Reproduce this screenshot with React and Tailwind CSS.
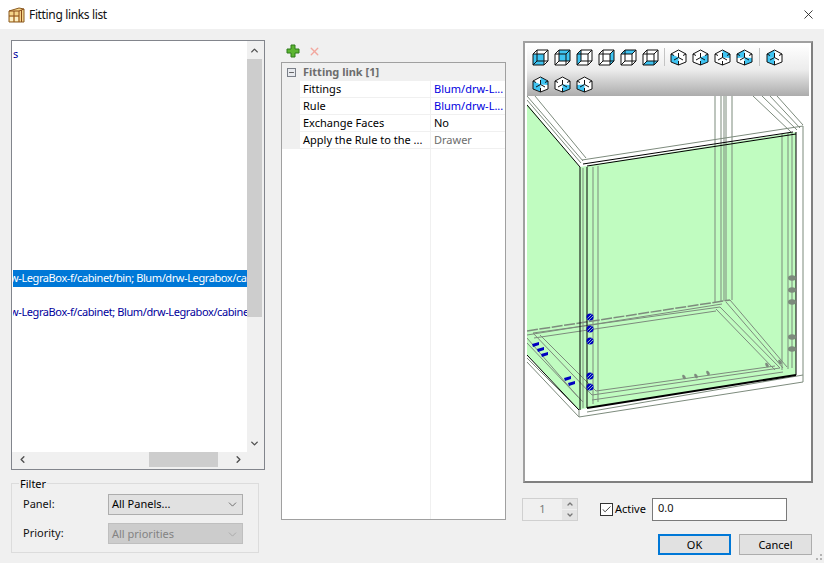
import { X, ChevronDown, ChevronUp, ChevronLeft, ChevronRight, Minus, Check } from 'lucide-react';

function CubeIcon({ face }) {
  const faces = {
    front: 'M1 5h11v11H1z',
    back: 'M5 1h11v11H5z',
    left: 'M1 5l4-4v11l-4 4z',
    right: 'M12 5l4-4v11l-4 4z',
    top: 'M1 5l4-4h11l-4 4z',
    bottom: 'M1 16l4-4h11l-4 4z',
  };
  return (
    <svg width="17" height="17" viewBox="0 0 17 17" className="shrink-0">
      <path d="M1 5l4-4h11v11l-4 4H1z" fill="#fff" />
      <path d={faces[face]} fill="#3fc4f2" />
      <path d="M1 5h11v11H1zM5 1h11v11H5zM1 5l4-4M12 5l4-4M12 16l4-4M1 16l4-4" fill="none" stroke="#111" strokeWidth="1" />
    </svg>
  );
}

function IsoIcon({ wedges }) {
  const all = {
    l: 'M8.5 8.5L1 5v8l7.5 3z',
    r: 'M8.5 8.5L16 5v8l-7.5 3z',
    t: 'M8.5 8.5L1 5l7.5-4L16 5z',
    tr: 'M8.5 8.5V1L16 5v4z',
    tl: 'M8.5 8.5V1L1 5v4z',
    br: 'M8.5 8.5L16 9v4l-7.5 3z',
    bl: 'M8.5 8.5L1 9v4l7.5 3z',
  };
  return (
    <svg width="17" height="17" viewBox="0 0 17 17" className="shrink-0">
      <path d="M8.5 1L16 5v8l-7.5 3L1 13V5z" fill="#fff" />
      {wedges.map((w) => (
        <path key={w} d={all[w]} fill="#3fc4f2" />
      ))}
      <path d="M8.5 1L16 5v8l-7.5 3L1 13V5zM8.5 8.5V4M8.5 8.5L4 11M8.500 8.5l4.5 2.5M8.5 12v4M1 5l3 1.5M16 5l-3 1.5" fill="none" stroke="#111" strokeWidth="1" />
    </svg>
  );
}

function Cabinet() {
  const grey = [
    'M527 96L583 161', 'M527 100L581 163', 'M535 96L586 158', 'M582 160L803 126', 'M803 126V132',
    'M753 96L791 132', 'M762 96L797 130', 'M770 96L800 128', 'M777 96L803 125',
    'M715 96V302', 'M721 96V301', 'M724 96V301', 'M726 96V301', 'M732 96V300',
    'M782 134V370', 'M788 133V369', 'M792 133V368', 'M803 132V373',
    'M583 168V408', 'M593 167V404', 'M598 166V402',
    'M527 335L722 304', 'M533 333L720 307', 'M534 338L716 311',
    'M730 300L787 367', 'M726 302L783 368', 'M720 307L780 368', 'M716 309L775 370',
    'M592 395L780 368', 'M592 400L783 372', 'M596 391L775 366', 'M587 412L803 375',
    'M579 417L803 382', 'M803 373V382', 'M579 410V417', 'M527 358L579 410', 'M527 362L579 417',
    'M527 338L578 397', 'M527 343L583 402', 'M533 333L592 395', 'M540 335L596 391',
  ];
  return (
    <svg viewBox="527 44 282 436" className="block w-[282px] h-[436px]">
      <path d="M527 104L580 167L796 132V375L587 408L579 410L527 355z" fill="#c0fcc0" />
      <g fill="none" stroke="#7d8b7d" strokeWidth="1">
        {grey.map((d) => (
          <path key={d} d={d} />
        ))}
        <path d="M527 331L730 300" strokeWidth="1.5" strokeDasharray="11 1.5" />
      </g>
      <g fill="none" stroke="#000" strokeWidth="1">
        <path d="M527 105L580 167M527 355L579 410M580 167V410M587 167V408M583 164L793 132M587 166L796 134M796 132V375" />
        <path d="M587 408L796 375" strokeWidth="2" />
      </g>
      <g fill="#0000c0">
        {[317, 329, 341, 376, 387].map((y) => (
          <g key={y}>
            <circle cx="590" cy={y} r="3.5" />
            <path d={`M587.5 ${y + 1.5}l4-4M589 ${y + 3}l4-4`} stroke="#c0fcc0" strokeWidth="0.7" />
          </g>
        ))}
        {[[536, 345], [541, 350], [545, 355], [568, 379], [572, 384]].map(([x, y]) => (
          <path key={x} d={`M${x - 4} ${y - 1}l7-2v3l-6 2z`} />
        ))}
      </g>
      <g fill="#7d8b7d">
        {[278, 290, 302, 337, 349].map((y) => (
          <ellipse key={y} cx="792" cy={y} rx="4" ry="2.8" />
        ))}
        {[[684, 377], [696, 376], [708, 373], [767, 365], [780, 362]].map(([x, y]) => (
          <ellipse key={x} cx={x} cy={y} rx="1.5" ry="2.5" transform={`rotate(-30 ${x} ${y})`} />
        ))}
      </g>
    </svg>
  );
}

function PropRow({ name, value, valueClass }) {
  return (
    <div className="flex h-[17px] border-b border-[#f0f0f0]">
      <div className="w-[18px] bg-[#f0f0f0] shrink-0" />
      <div className="w-[131px] shrink-0 pl-[3px] border-r border-[#f0f0f0] truncate leading-[15px] text-black">{name}</div>
      <div className={`pl-[3px] leading-[15px] truncate ${valueClass}`}>{value}</div>
    </div>
  );
}

export default function App() {
  return (
    <div className="relative w-[824px] h-[563px] bg-[#f0f0f0] flex flex-col overflow-hidden text-[11px] text-black font-['Noto_Sans',sans-serif]">
      <div className="h-[29px] bg-white flex items-center shrink-0">
        <svg width="17" height="17" viewBox="0 0 17 17" className="ml-[8px] shrink-0">
          <path d="M1 5l10-3 5 1v13H1z" fill="#f4d48a" stroke="#8a5a20" />
          <path d="M1 5h10v11M6 5v11M1 10h10M11 5l5-2M13.500 4v12" fill="none" stroke="#8a4a18" />
          <path d="M2 11h3v4H2zM7 11h3v4H7z" fill="#fbeec4" />
        </svg>
        <span className="ml-[4px] text-[12px] text-[#111] tracking-[-0.35px]">Fitting links list</span>
        <X className="ml-auto mr-[8px] w-[15px] h-[15px] text-[#222]" strokeWidth={1.4} />
      </div>

      <div className="flex pl-[11px] pt-[11px]">
        <div className="w-[254px] shrink-0">
          <div className="h-[430px] border border-[#82858c] bg-[#f0f0f0] flex flex-col">
            <div className="flex h-[411px]">
              <div className="w-[235px] bg-white overflow-hidden text-[#00009c] whitespace-nowrap tracking-[-0.4px]">
                <div className="h-[5px]" />
                <div className="h-[17px] leading-[15px] pl-[1px]">s</div>
                <div className="h-[207px]" />
                <div className="h-[17px] leading-[16px] bg-[#0078d7] text-white ml-[1px] overflow-hidden">
                  <div className="-ml-[3px]">w-LegraBox-f/cabinet/bin; Blum/drw-Legrabox/cabinet</div>
                </div>
                <div className="h-[17px]" />
                <div className="h-[17px] leading-[16px] ml-[1px] overflow-hidden">
                  <div className="-ml-[3px]">w-LegraBox-f/cabinet; Blum/drw-Legrabox/cabinet</div>
                </div>
              </div>
              <div className="w-[15px] flex flex-col">
                <div className="h-[18px] flex items-center justify-center">
                  <ChevronUp className="w-[11px] h-[11px] text-[#505050]" strokeWidth={3} />
                </div>
                <div className="h-[258px] bg-[#cdcdcd] shrink-0" />
                <div className="mt-auto h-[17px] flex items-center justify-center">
                  <ChevronDown className="w-[11px] h-[11px] text-[#505050]" strokeWidth={3} />
                </div>
              </div>
            </div>
            <div className="h-[15px] flex items-center">
              <div className="w-[16px] flex justify-end">
                <ChevronLeft className="w-[11px] h-[11px] text-[#505050]" strokeWidth={3} />
              </div>
              <div className="ml-[121px] w-[69px] h-[15px] bg-[#cdcdcd]" />
              <div className="ml-[15px]">
                <ChevronRight className="w-[11px] h-[11px] text-[#505050]" strokeWidth={3} />
              </div>
            </div>
          </div>

          <div className="relative mt-[13px] w-[248px] h-[70px] border border-[#dcdcdc] pl-[11px] pr-[15px] pt-[10px]">
            <span className="absolute left-[7px] -top-[7px] bg-[#f0f0f0] px-[1px] leading-[14px]">Filter</span>
            <div className="flex items-center h-[21px]">
              <span className="w-[85px] text-[#111]">Panel:</span>
              <div className="w-[135px] h-[21px] border border-[#adadad] bg-[#e1e1e1] flex items-center pl-[3px]">
                All Panels...
                <ChevronDown className="ml-auto mr-[3px] w-[13px] h-[13px] text-[#333]" strokeWidth={1.2} />
              </div>
            </div>
            <div className="flex items-center h-[21px] mt-[8px]">
              <span className="w-[85px] text-[#111]">Priority:</span>
              <div className="w-[135px] h-[21px] border border-[#bfbfbf] bg-[#cccccc] flex items-center pl-[3px] pt-[1px] text-[#838383]">
                All priorities
                <ChevronDown className="ml-auto mr-[3px] w-[13px] h-[13px] text-[#999]" strokeWidth={1.2} />
              </div>
            </div>
          </div>
        </div>

        <div className="ml-[16px] w-[225px] shrink-0">
          <div className="h-[22px] flex items-center gap-[8px] pl-[5px]">
            <svg width="14" height="14" viewBox="0 0 14 14">
              <path d="M5 1h4v4h4v4H9v4H5V9H1V5h4z" fill="#5cb531" stroke="#2f7a1c" />
            </svg>
            <X className="w-[13px] h-[13px] text-[#f2a79e]" strokeWidth={2.5} />
          </div>
          <div className="h-[458px] border border-[#a0a0a0] bg-white flex flex-col">
            <div className="h-[18px] bg-[#f0f0f0] flex items-center font-bold text-[#6d6d6d]">
              <div className="w-[18px] flex justify-center shrink-0">
                <div className="w-[9px] h-[9px] border border-[#7a7f88] bg-[#e8eaee] flex items-center justify-center">
                  <Minus className="w-[7px] h-[7px] text-[#333]" strokeWidth={2.5} />
                </div>
              </div>
              <span className="ml-[3px]">Fitting link [1]</span>
            </div>
            <PropRow name="Fittings" value="Blum/drw-L..." valueClass="text-[#0000e0]" />
            <PropRow name="Rule" value="Blum/drw-L..." valueClass="text-[#0000e0]" />
            <PropRow name="Exchange Faces" value="No" valueClass="text-black" />
            <PropRow name="Apply the Rule to the ..." value="Drawer" valueClass="text-[#6d6d6d]" />
            <div className="flex-1 ml-[148px] border-l border-[#f0f0f0]" />
          </div>
        </div>

        <div className="ml-[17px] w-[290px] shrink-0 pt-[1px]">
          <div className="relative h-[442px] border-2 border-t-[#a0a0a0] border-l-[#a0a0a0] border-r-[#808080] border-b-[#808080] bg-white px-[2px] pt-[1px]">
            <Cabinet />
            <div className="absolute left-[2px] top-[1px] w-[282px] h-[52px] bg-gradient-to-b from-white via-[#ececec] to-[#acacac] pl-[5px] pt-[3px]">
              <div className="flex items-center h-[20px]">
                <div className="flex gap-[5px]">
                  <CubeIcon face="front" />
                  <CubeIcon face="back" />
                  <CubeIcon face="left" />
                  <CubeIcon face="right" />
                  <CubeIcon face="top" />
                  <CubeIcon face="bottom" />
                </div>
                <div className="w-px h-[18px] bg-[#c4c4c4] mx-[5px]" />
                <div className="flex gap-[5px]">
                  <IsoIcon wedges={['l']} />
                  <IsoIcon wedges={['r']} />
                  <IsoIcon wedges={['tr']} />
                  <IsoIcon wedges={['tl', 'br']} />
                </div>
                <div className="w-px h-[18px] bg-[#c4c4c4] mx-[6px]" />
                <IsoIcon wedges={['tl', 'bl']} />
              </div>
              <div className="flex gap-[5px] mt-[9px]">
                <IsoIcon wedges={['tr', 'l']} />
                <IsoIcon wedges={['br']} />
                <IsoIcon wedges={['bl']} />
              </div>
            </div>
          </div>

          <div className="flex items-center h-[23px] mt-[15px] -ml-[1px]">
            <div className="w-[56px] h-[23px] border border-[#d0d0d0] flex text-[#7a7a7a]">
              <span className="flex-1 text-center leading-[20px]">1</span>
              <div className="w-[15px] flex flex-col gap-px">
                <div className="flex-1 bg-[#e4e4e4] flex items-center justify-center">
                  <ChevronUp className="w-[8px] h-[8px] text-[#777]" strokeWidth={4} />
                </div>
                <div className="flex-1 bg-[#e4e4e4] flex items-center justify-center">
                  <ChevronDown className="w-[8px] h-[8px] text-[#777]" strokeWidth={4} />
                </div>
              </div>
            </div>
            <div className="ml-[22px] w-[13px] h-[13px] border border-[#333] bg-white flex items-center justify-center shrink-0">
              <Check className="w-[11px] h-[11px] text-[#333]" strokeWidth={2} />
            </div>
            <span className="ml-[2px]">Active</span>
            <div className="ml-auto mr-[26px] w-[135px] h-[23px] border border-[#7a7a7a] bg-white pl-[5px] leading-[18px] text-[#111]">0.0</div>
          </div>

          <div className="flex justify-end gap-[8px] mt-[13px] pr-[1px]">
            <button className="w-[73px] h-[21px] border-2 border-[#0078d7] bg-[#e1e1e1] leading-[17px]">OK</button>
            <button className="w-[73px] h-[21px] border border-[#adadad] bg-[#e1e1e1] leading-[19px]">Cancel</button>
          </div>
        </div>
      </div>

      <svg width="12" height="12" viewBox="0 0 12 12" className="absolute right-0 bottom-0">
        <path d="M8 3h2v2H8zM4 7h2v2H4zM8 7h2v2H8z" fill="#b4b4b4" />
      </svg>
    </div>
  );
}
